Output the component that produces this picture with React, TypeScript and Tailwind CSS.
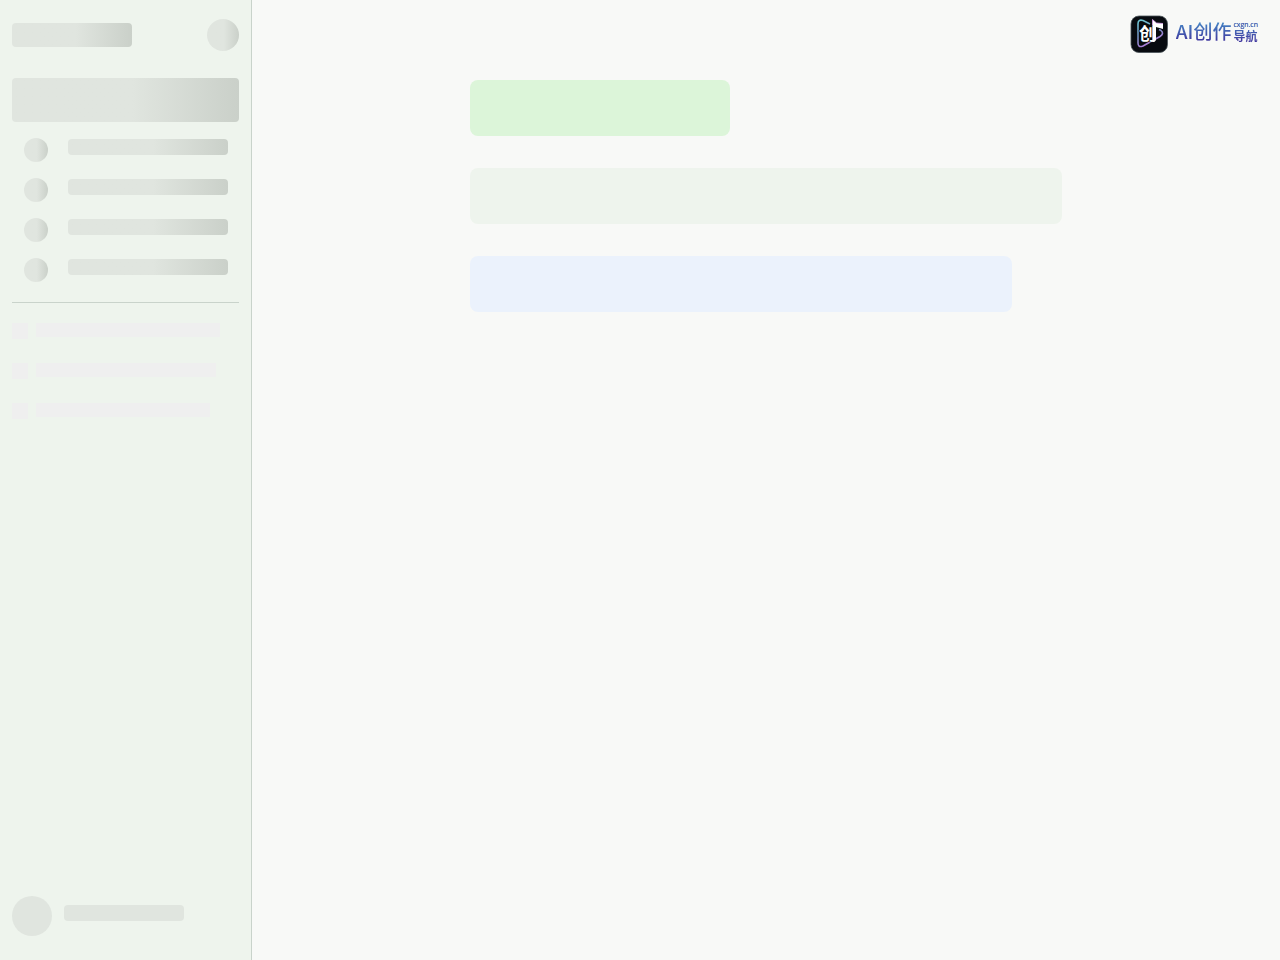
import clsx from "clsx";

const navItems = ["chat", "search", "files", "apps"];
const historyWidths = ["w-46", "w-45", "w-[174px]"];

function Shimmer({ className }: { className?: string }) {
  return (
    <div
      className={clsx(
        "bg-linear-to-r from-[#e0e5df] from-53% to-[#cad0c9]",
        className
      )}
    />
  );
}

function LogoMark() {
  return (
    <svg viewBox="0 0 38 38" className="size-[38px]" aria-hidden>
      <defs>
        <linearGradient id="mark" x1="0" y1="0" x2="0.4" y2="1">
          <stop offset="0" stopColor="#70cbd6" />
          <stop offset="0.5" stopColor="#6f91bd" />
          <stop offset="1" stopColor="#b47bdc" />
        </linearGradient>
      </defs>
      <rect x="1" y="1" width="36.5" height="36.5" rx="8" fill="#080b10" stroke="#4a5459" strokeWidth="0.8" />
      <path
        d="M20 9 L13 5.5 Q8 4 8 9 V28 Q8 33 13 31 L30 21.5 Q34.5 18.5 31 15.5 L29 14.5"
        fill="none"
        stroke="url(#mark)"
        strokeWidth="1.6"
        strokeLinejoin="round"
      />
      <text
        x="9"
        y="25"
        fontSize="17"
        fontWeight="700"
        fill="#fff"
        stroke="#080b10"
        strokeWidth="1"
        paintOrder="stroke"
        className="font-['Noto_Sans_CJK_SC',sans-serif]"
      >
        创
      </text>
      <path d="M22.5 4.5 L26.5 8 L33 8.5 V14 L26 12 V25 Q24.5 28 22.5 26.5 Z" fill="#fff" />
      <path d="M22.5 10 V4.5 L26.5 8 L33 8.5" fill="none" stroke="#dca4ef" strokeWidth="0.8" />
    </svg>
  );
}

function Brand() {
  return (
    <a
      href="#"
      className="flex items-start gap-2 font-['Noto_Sans_CJK_SC',sans-serif]"
    >
      <LogoMark />
      <span className="flex items-start gap-0.5 bg-linear-to-b from-[#4389c6] from-20% to-[#40389f] to-80% bg-clip-text text-transparent">
        <span className="text-[19px] leading-8 font-medium">AI创作</span>
        <span className="flex flex-col gap-px pt-1">
          <span className="font-['Open_Sans',sans-serif] text-[7px] leading-3 text-[#4f5fb0]">
            cxgn.cn
          </span>
          <span className="text-xs leading-2 font-bold">导航</span>
        </span>
      </span>
    </a>
  );
}

function Sidebar() {
  return (
    <aside className="flex w-63 shrink-0 flex-col border-r border-[#c9d3cb] bg-[#eef4ed] px-3">
      <div className="flex h-[70px] items-center justify-between">
        <Shimmer className="h-6 w-30 rounded-sm" />
        <Shimmer className="size-8 rounded-full" />
      </div>
      <Shimmer className="mt-2 h-11 rounded-sm" />
      <ul className="mt-4 flex flex-col gap-4">
        {navItems.map((item) => (
          <li key={item} className="flex items-start gap-5 pl-3">
            <Shimmer className="size-6 rounded-full" />
            <Shimmer className="mt-px h-4 w-40 rounded-sm" />
          </li>
        ))}
      </ul>
      <hr className="mt-5 border-[#c9d3cb]" />
      <ul className="mt-5 flex flex-col gap-6">
        {historyWidths.map((width) => (
          <li key={width} className="flex items-start gap-2">
            <div className="size-4 bg-[#efefef]" />
            <div className={clsx("h-3.5 bg-[#efefef]", width)} />
          </li>
        ))}
      </ul>
      <div className="mt-auto mb-6 flex items-start gap-3">
        <div className="size-10 rounded-full bg-[#e0e5df]" />
        <div className="mt-[9px] h-4 w-30 rounded-sm bg-[#e0e5df]" />
      </div>
    </aside>
  );
}

export default function App() {
  return (
    <div className="flex min-h-screen bg-[#f8f9f7]">
      <Sidebar />
      <main className="flex min-w-0 flex-1 flex-col">
        <header className="flex h-20 items-start justify-end pt-[15px] pr-[22px]">
          <Brand />
        </header>
        <div className="mx-auto flex w-full max-w-[592px] flex-col gap-8">
          <div className="h-14 w-65 max-w-full rounded-lg bg-[#dcf5d9]" />
          <div className="h-14 rounded-lg bg-[#eef4ed]" />
          <div className="h-14 w-[542px] max-w-full rounded-lg bg-[#ebf2fc]" />
        </div>
      </main>
    </div>
  );
}
